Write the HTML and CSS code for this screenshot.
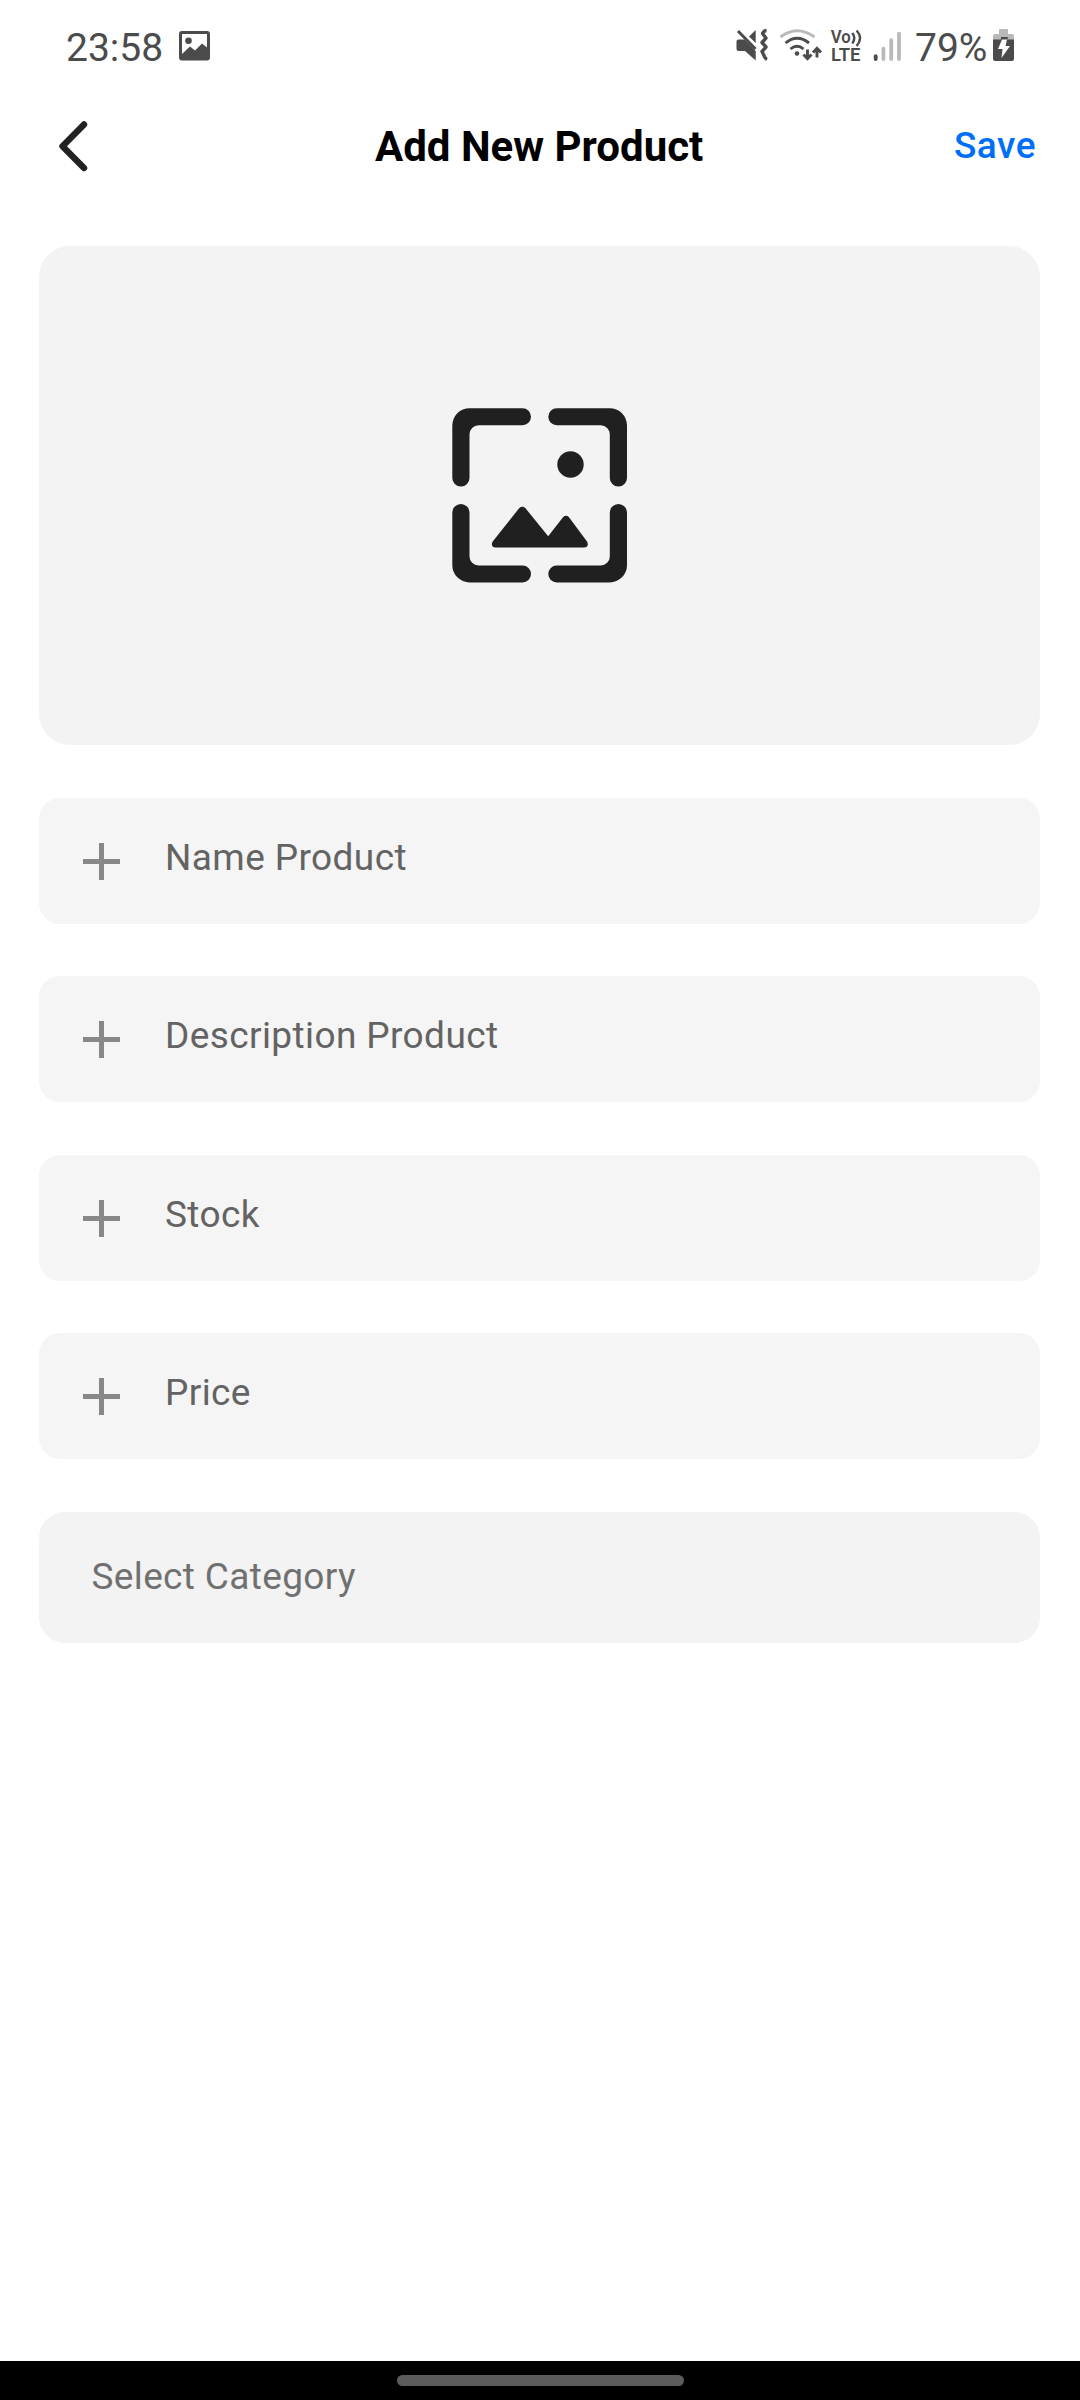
FILE: index.html
```html
<!DOCTYPE html>
<html lang="en">
<head>
<meta charset="utf-8">
<title>Add New Product</title>
<link rel="stylesheet" href="styles.css">
</head>
<body>
<div class="screen">
  <div class="status">
    <span class="status-text clock">23:58</span>
    <svg class="picture" width="32" height="30" viewBox="0 0 32 30"><path fill="#4b4b4b" fill-rule="evenodd" d="M3.500 0h24.500a3 3 0 0 1 3 3v23.500a3 3 0 0 1-3 3H3a3 3 0 0 1-3-3V3a3 3 0 0 1 3-3zM3 3v20l8-7.500 5 4 7-7 5 4V3zM9.500 6.500a3.300 3.300 0 1 1 0 6.600 3.300 3.300 0 0 1 0-6.600z"/></svg>
    <svg class="indicators" width="170" height="65" viewBox="0 0 170 65">
      <g fill="#4b4b4b">
        <path d="M18 24.500h6.500l11.200 11.500V45.500L25 36H18.500a2 2 0 0 1-2-2v-7.500a2 2 0 0 1 1.500-2z"/>
        <path d="M29 21.500l6.700-6.500v13z"/>
        <circle cx="77" cy="38.500" r="2.300"/>
      </g>
      <g fill="none" stroke="#4b4b4b" stroke-width="2.900">
        <path d="M18 16L35.500 34" stroke-width="3"/>
        <path d="M46.500 15.500q-2.500 0-4 3l3.500 4.500-4 4.500 4 4.500-4 4.500 2 4q1 3 3 4" stroke-linejoin="round" stroke-width="3.400"/>
        <path d="M65.500 28q11.500-9.500 23.500 0"/><path d="M70.500 34q6.500-5.500 13 0"/>
        <path d="M87.500 34.500v9M83.500 39.500l4 4.200 4-4.200M97 42.500v-9M93 37.500l4-4.200 4 4.200"/>
        <path d="M132.300 18q4 5 0 10.500M136.600 15.500q7 7.500 0 15.500" stroke-width="2.400"/>
      </g>
      <path d="M60.500 22q16.500-12.500 34 0" fill="none" stroke="#b9b9b9" stroke-width="2.900"/>
      <text x="110.700" y="28" class="volte" textLength="20" lengthAdjust="spacingAndGlyphs">Vo</text>
      <text x="111" y="45.500" class="volte" textLength="29.500" lengthAdjust="spacingAndGlyphs">LTE</text>
      <path d="M155.700 41.200v2.900" stroke="#4b4b4b" stroke-width="3.800" stroke-linecap="round"/>
      <path d="M163.400 33.600v10.500" stroke="#b9b9b9" stroke-width="3.800" stroke-linecap="round"/>
    </svg>
    <svg class="signal" width="14" height="65" viewBox="0 0 14 65"><path d="M2.200 25.200v18.900M10 18.600v25.500" stroke="#b9b9b9" stroke-width="3.800" stroke-linecap="round"/></svg>
    <span class="status-text percent">79%</span>
    <svg class="battery" width="21" height="33" viewBox="0 0 21 33"><path fill="#b9b9b9" d="M6 1q0-1 1-1h7q1 0 1 1v4h4q2 0 2 2v4H0V7q0-2 2-2h4z"/><path fill="#4b4b4b" d="M0 10.500h21V30q0 2-2 2H2q-2 0-2-2z"/><path fill="#4b4b4b" d="M8 8h7l-1 3H8z"/><path fill="#fff" d="M9 10.500h5L12.500 17H17L8.500 29l1-9H5z"/></svg>
  </div>
  <header class="header">
    <svg width="32" height="54" viewBox="0 0 32 54"><path d="M27 5.500L5.500 27.200 27 49" fill="none" stroke="#222" stroke-width="6.400" stroke-linecap="round" stroke-linejoin="round"/></svg>
    <h1 class="title">Add New Product</h1>
    <span class="save">Save</span>
  </header>
  <main class="form">
    <div class="photo">
      <svg width="175" height="175" viewBox="22 18 175 175"><g fill="#202020">
        <path id="corner" d="M39.500 18.300H92.500a8.500 8.500 0 0 1 0 17H48.500a9 9 0 0 0-9 9V88a8.600 8.600 0 0 1-17.200 0V35.500a17.200 17.200 0 0 1 17.200-17.200z"/>
        <use href="#corner" transform="matrix(-1 0 0 1 219.300 0)"/>
        <use href="#corner" transform="matrix(1 0 0 -1 0 210.700)"/>
        <use href="#corner" transform="matrix(-1 0 0 -1 219.300 210.700)"/>
        <circle cx="140.500" cy="74.500" r="13.200"/>
        <path d="M89.300 118Q92.300 115.500 95.300 118L118.200 146.300L133 127.200Q136 124.500 139 127.200L157 151.500C159 155 157 157.500 154 157.500H65.500C62.500 157.500 60.500 154.500 62.900 151.300z"/>
      </g></svg>
    </div>
    <div class="field"><i class="plus"></i><span class="label">Name Product</span></div>
    <div class="field"><i class="plus"></i><span class="label">Description Product</span></div>
    <div class="field"><i class="plus"></i><span class="label">Stock</span></div>
    <div class="field"><i class="plus"></i><span class="label">Price</span></div>
    <div class="select"><span>Select Category</span></div>
  </main>
  <footer class="nav"><div class="handle"></div></footer>
</div>
</body>
</html>
```
FILE: styles.css
```css
* { box-sizing: border-box; }
body { margin: 0; background: #fff; font-family: Roboto, sans-serif; }
svg { display: block; flex: none; }
.screen { width: 1080px; height: 2400px; display: flex; flex-direction: column; }
.status { height: 92px; display: flex; align-items: flex-start; padding-left: 66px; }
.status-text { font-size: 39px; line-height: 46px; color: #4b4b4b; margin-top: 25px; white-space: nowrap; }
.clock { width: 113px; }
.picture { margin-top: 31px; }
.indicators { margin: 15px 0 0 509px; }
.signal { margin: 15px 0 0 -1px; }
.percent { width: 78px; margin-left: 12px; }
.battery { margin: 29px 0 0 0; }
.volte { font: 600 17.500px Roboto, sans-serif; fill: #4b4b4b; }
.header { height: 107px; display: flex; align-items: flex-start; padding: 0 44px 0 57px; }
.header svg { margin-top: 27px; }
.title { margin: 30px 0 0 286px; width: 540px; font-size: 42px; line-height: 50px; font-weight: 700; color: #000; white-space: nowrap; }
.save { margin: 32px 0 0 39px; font-size: 37px; line-height: 44px; font-weight: 500; letter-spacing: 0.500px; color: #006ff7; white-space: nowrap; }
.form { flex: 1; padding: 47px 40px 0 39px; display: flex; flex-direction: column; gap: 52.500px; }
.photo { height: 499.250px; border-radius: 31px; background: #f3f3f3; display: flex; justify-content: center; padding-top: 162px; }
.field { height: 126px; border-radius: 21px; background: #f5f5f5; display: flex; align-items: flex-start; padding-left: 44px; }
.plus { width: 37px; height: 37px; margin-top: 45px; background: linear-gradient(#888, #888) center / 100% 5px no-repeat, linear-gradient(#888, #888) center / 5px 100% no-repeat; }
.label { margin: 38px 0 0 45px; font-size: 37px; line-height: 44px; letter-spacing: 0.400px; color: #636363; white-space: nowrap; }
.select { height: 131px; border-radius: 26px; background: #f3f3f3; padding: 43px 0 0 52.500px; font-size: 37px; line-height: 44px; letter-spacing: 0.350px; color: #707070; }
.nav { height: 39px; background: #000; display: flex; justify-content: center; padding-top: 14px; }
.handle { width: 287px; height: 11px; border-radius: 6px; background: #5c5c5c; }
```
